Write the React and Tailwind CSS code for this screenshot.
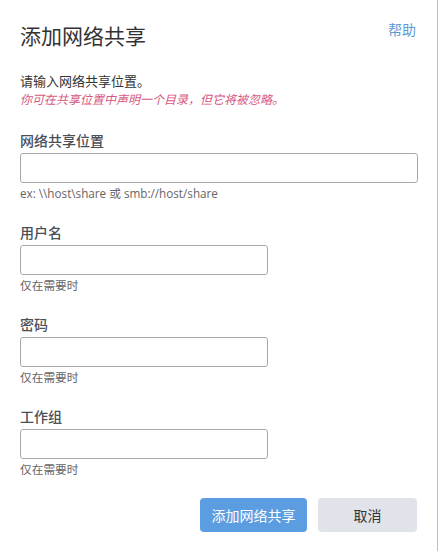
export default function App() {
  const fields = [
    { label: '网络共享位置', hint: 'ex: \\\\host\\share 或 smb://host/share', wide: true },
    { label: '用户名', hint: '仅在需要时' },
    { label: '密码', hint: '仅在需要时', type: 'password' },
    { label: '工作组', hint: '仅在需要时' },
  ]

  return (
    <div
      className="h-[551px] w-[441px] bg-white"
      style={{ fontFamily: '"Open Sans", "Noto Sans CJK SC", sans-serif' }}
    >
      <div className="h-full w-[438px] border-r border-[#b8c0cb] px-[20px] pt-[22px]">
        <div className="flex items-start justify-between">
          <h1 className="h-[28px] text-[21px] leading-[28px] text-[#333]">添加网络共享</h1>
          <a className="mr-[1px] mt-[-2px] text-[14px] leading-[20px] text-[#5a9bd8]">帮助</a>
        </div>

        <p className="mt-[21px] text-[13px] font-normal leading-[20px] text-[#333]">请输入网络共享位置。</p>
        <p className="mt-[1px] text-[12px] italic leading-[16px] text-[#d6577f]">
          你可在共享位置中声明一个目录，但它将被忽略。
        </p>

        <div className="mt-[23px] flex flex-col gap-[22px]">
          {fields.map((f) => (
            <div key={f.label} className="flex flex-col">
              <label className="text-[14px] font-medium leading-[20px] text-[#4a5059]">{f.label}</label>
              <input
                type={f.type || 'text'}
                className={`mt-[2px] h-[30px] rounded-[3px] border border-[#a9a9a9] bg-white outline-none ${
                  f.wide ? 'w-[398px]' : 'w-[248px]'
                }`}
              />
              <span className="mt-[2px] text-[11.7px] leading-[16px] text-[#666]">{f.hint}</span>
            </div>
          ))}
        </div>

        <div className="mt-[21px] flex justify-end gap-[11px]">
          <button className="h-[34px] w-[107px] rounded-[4px] bg-[#5b9de0] text-[14px] font-normal text-white">
            添加网络共享
          </button>
          <button className="h-[34px] w-[99px] rounded-[4px] bg-[#e0e3e9] text-[14px] font-normal text-[#333]">
            取消
          </button>
        </div>
      </div>
    </div>
  )
}
